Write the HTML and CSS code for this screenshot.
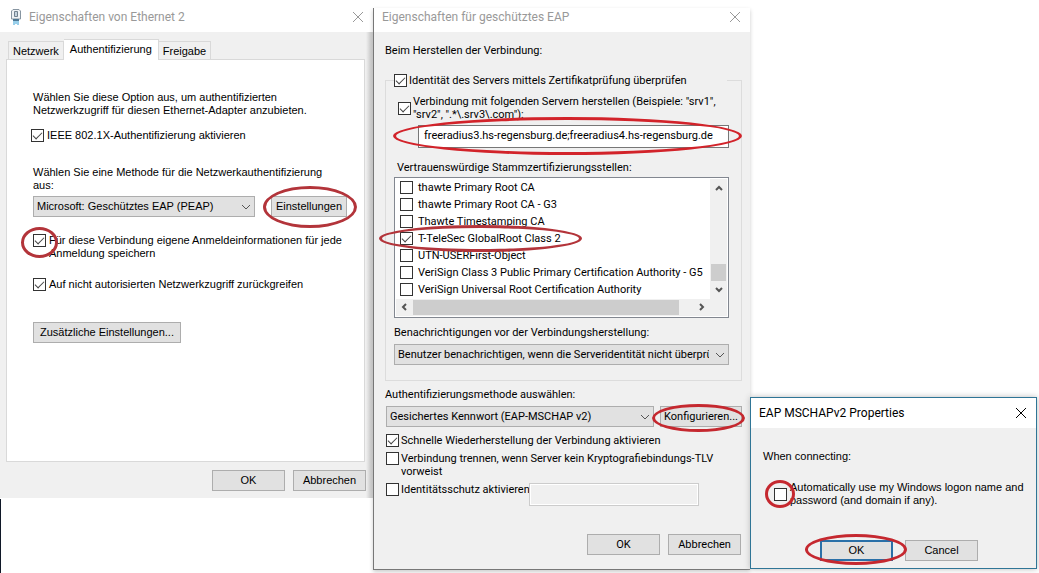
FILE: index.html
```html
<!DOCTYPE html>
<html lang="de">
<head>
  <meta charset="UTF-8">
  <title>Eigenschaften von Ethernet 2</title>
  <link rel="stylesheet" href="styles.css">
</head>
<body>
<main class="desktop">

  <section class="window ethernet">
    <header class="titlebar">
      <svg class="plug" width="12" height="18" viewBox="0 0 12 18">
        <path d="M3 1.500h6l1.500 1.500v8H1.500V3z" fill="#eef2f5" stroke="#8795a1"/>
        <path d="M4.500 3.500h3v5h-3z" fill="#c3d2dd" stroke="#71808e"/>
        <path d="M3 11h6v2H3z" fill="#4e7894"/>
        <path d="M4 13v4M6 13v3M8 13v4" stroke="#35a0d6"/>
      </svg>
      <h1>Eigenschaften von Ethernet 2</h1>
      <button class="close" aria-label="Schließen"><svg width="12" height="12" viewBox="0 0 12 12"><path d="M1 1l10 10M11 1L1 11"/></svg></button>
    </header>

    <div class="tabs">
      <button class="tab">Netzwerk</button>
      <button class="tab active">Authentifizierung</button>
      <button class="tab">Freigabe</button>
    </div>
    <div class="panel">
      <p>Wählen Sie diese Option aus, um authentifizierten<br>Netzwerkzugriff für diesen Ethernet-Adapter anzubieten.</p>
      <label class="check ieee"><input type="checkbox" checked>IEEE 802.1X-Authentifizierung aktivieren</label>

      <label class="method" for="methode">Wählen Sie eine Methode für die Netzwerkauthentifizierung<br>aus:</label>
      <div class="row">
        <span class="select">
          <select id="methode"><option>Microsoft: Geschütztes EAP (PEAP)</option></select>
          <svg width="10" height="6" viewBox="0 0 10 6"><path d="M1 1l4 4 4-4"/></svg>
        </span>
        <span class="marked mark-settings"><button class="btn">Einstellungen</button></span>
      </div>

      <label class="check eigene">
        <span class="marked mark-save"><input type="checkbox" checked></span>
        <span>Für diese Verbindung eigene Anmeldeinformationen für jede<br>Anmeldung speichern</span>
      </label>
      <label class="check fallback"><input type="checkbox" checked>Auf nicht autorisierten Netzwerkzugriff zurückgreifen</label>
      <button class="btn extra">Zusätzliche Einstellungen...</button>
    </div>

    <footer class="actions">
      <button class="btn">OK</button>
      <button class="btn">Abbrechen</button>
    </footer>
  </section>

  <section class="window eap">
    <header class="titlebar">
      <h1>Eigenschaften für geschütztes EAP</h1>
      <button class="close" aria-label="Schließen"><svg width="12" height="12" viewBox="0 0 12 12"><path d="M1 1l10 10M11 1L1 11"/></svg></button>
    </header>

    <div class="content">
      <p>Beim Herstellen der Verbindung:</p>

      <fieldset>
        <legend><label class="check"><input type="checkbox" checked>Identität des Servers mittels Zertifikatprüfung überprüfen</label></legend>
        <label class="check servers">
          <input type="checkbox" checked>
          <span>Verbindung mit folgenden Servern herstellen (Beispiele: "srv1",<br>"srv2", ".*\.srv3\.com"):</span>
        </label>
        <div class="marked mark-servers">
          <input class="text" type="text" aria-label="Server" value="freeradius3.hs-regensburg.de;freeradius4.hs-regensburg.de">
        </div>

        <p class="list-title">Vertrauenswürdige Stammzertifizierungsstellen:</p>
        <div class="list">
          <div class="items">
            <label class="check"><input type="checkbox">thawte Primary Root CA</label>
            <label class="check"><input type="checkbox">thawte Primary Root CA - G3</label>
            <label class="check"><input type="checkbox">Thawte Timestamping CA</label>
            <label class="check marked mark-telesec"><input type="checkbox" checked>T-TeleSec GlobalRoot Class 2</label>
            <label class="check"><input type="checkbox">UTN-USERFirst-Object</label>
            <label class="check"><input type="checkbox">VeriSign Class 3 Public Primary Certification Authority - G5</label>
            <label class="check"><input type="checkbox">VeriSign Universal Root Certification Authority</label>
          </div>
          <div class="vbar">
            <svg width="8" height="6" viewBox="0 0 8 6"><path d="M1 5l3-3 3 3"/></svg>
            <span class="thumb"></span>
            <svg width="8" height="6" viewBox="0 0 8 6"><path d="M1 1l3 3 3-3"/></svg>
          </div>
          <div class="hbar">
            <svg width="6" height="8" viewBox="0 0 6 8"><path d="M5 1L2 4l3 3"/></svg>
            <span class="thumb"></span>
            <svg width="6" height="8" viewBox="0 0 6 8"><path d="M1 1l3 3-3 3"/></svg>
          </div>
        </div>

        <label class="notify" for="benachrichtigung">Benachrichtigungen vor der Verbindungsherstellung:</label>
        <span class="select">
          <select id="benachrichtigung"><option>Benutzer benachrichtigen, wenn die Serveridentität nicht überprüft werden kann</option></select>
          <svg width="10" height="6" viewBox="0 0 10 6"><path d="M1 1l4 4 4-4"/></svg>
        </span>
      </fieldset>

      <label class="auth" for="auth">Authentifizierungsmethode auswählen:</label>
      <div class="row">
        <span class="select">
          <select id="auth"><option>Gesichertes Kennwort (EAP-MSCHAP v2)</option></select>
          <svg width="10" height="6" viewBox="0 0 10 6"><path d="M1 1l4 4 4-4"/></svg>
        </span>
        <span class="marked mark-config"><button class="btn">Konfigurieren...</button></span>
      </div>

      <div class="options">
        <label class="check"><input type="checkbox" checked>Schnelle Wiederherstellung der Verbindung aktivieren</label>
        <label class="check"><input type="checkbox"><span>Verbindung trennen, wenn Server kein Kryptografiebindungs-TLV<br>vorweist</span></label>
        <div class="identity">
          <label class="check"><input type="checkbox">Identitätsschutz aktivieren</label>
          <input class="text" type="text" aria-label="Anonyme Identität" disabled>
        </div>
      </div>
    </div>

    <footer class="actions">
      <button class="btn">OK</button>
      <button class="btn">Abbrechen</button>
    </footer>
  </section>

  <section class="window mschap" lang="en">
    <header class="titlebar">
      <h1>EAP MSCHAPv2 Properties</h1>
      <button class="close" aria-label="Close"><svg width="12" height="12" viewBox="0 0 12 12"><path d="M1 1l10 10M11 1L1 11"/></svg></button>
    </header>
    <div class="content">
      <p>When connecting:</p>
      <label class="check">
        <span class="marked mark-auto"><input type="checkbox"></span>
        <span>Automatically use my Windows logon name and<br>password (and domain if any).</span>
      </label>
    </div>
    <footer class="actions">
      <span class="marked mark-ok"><button class="btn default">OK</button></span>
      <button class="btn">Cancel</button>
    </footer>
  </section>

</main>
</body>
</html>
```
FILE: styles.css
```css
*, *::before, *::after {
  box-sizing: border-box;
}
body {
  margin: 0;
  background: #fff;
  color: #000;
  font: 11px/13px "Liberation Sans", Arial, sans-serif;
}
p, h1 {
  margin: 0;
}
button, input, select {
  margin: 0;
  font: inherit;
  color: inherit;
}
.desktop {
  display: grid;
  grid-template-columns: minmax(0, 373fr) minmax(0, 377fr) minmax(0, 289fr);
  align-items: start;
  min-height: 100vh;
  padding-top: 8px;
  background: linear-gradient(#101828, #101828) no-repeat 0 100% / 1px 74px;
}

/* windows */
.window {
  position: relative;
  display: flex;
  flex-direction: column;
  background: #f0f0f0;
  white-space: nowrap;
}
.ethernet {
  height: 490px;
  background: linear-gradient(to left, #bbb, #f0f0f0 7px);
}
.eap {
  height: 562px;
  border: 1px solid #777;
  border-top: 0;
  border-right: 0;
  box-shadow: 0 2px 4px #ccc;
  font-family: Roboto, Tahoma, sans-serif;
}
.mschap {
  align-self: end;
  height: 172px;
  margin: 0 2px 4px 0;
  border: 1px solid #2f7596;
  box-shadow: 0 0 6px #bbb;
}
.titlebar {
  display: flex;
  align-items: center;
  height: 24px;
  padding: 0 9px 6px 8px;
  background: #fff;
  color: #999;
}
.titlebar h1 {
  flex: 1;
  font: 12px/16px Roboto, "Segoe UI", sans-serif;
}
.plug {
  margin: 0 7px 0 2px;
}
.mschap .titlebar {
  height: 30px;
  padding-bottom: 0;
  color: #000;
}
.close {
  display: flex;
  padding: 0;
  border: 0;
  background: none;
}
.close path {
  fill: none;
  stroke: currentColor;
}

/* controls */
.btn {
  width: 73px;
  height: 21px;
  padding: 0;
  border: 1px solid #adadad;
  background: #e1e1e1;
}
.btn.default {
  border: 2px solid #2a70a8;
}
.actions {
  display: flex;
  justify-content: flex-end;
  gap: 8px;
  margin-top: auto;
}
.row {
  display: flex;
}
.check {
  display: flex;
  align-items: flex-start;
  gap: 3px;
}
input[type=checkbox] {
  appearance: none;
  display: block;
  flex: none;
  width: 13px;
  height: 13px;
  border: 1px solid #333;
  background: #fff;
}
input[type=checkbox]:checked::before {
  content: "";
  display: block;
  width: 9px;
  height: 5px;
  margin: 2px 1px;
  border: solid #444;
  border-width: 0 0 1px 1px;
  transform: rotate(-45deg);
}
.select {
  position: relative;
  display: flex;
  flex: 1;
}
.select select {
  appearance: none;
  width: 100%;
  height: 21px;
  padding: 0 19px 0 3px;
  border: 1px solid #adadad;
  border-radius: 0;
  background: #e1e1e1;
}
.select svg {
  position: absolute;
  right: 4px;
  top: 8px;
}
.select path {
  fill: none;
  stroke: #555;
}
.text {
  height: 23px;
  padding: 0 5px 2px;
  border: 1px solid #777;
  background: #fff;
}
.text:disabled {
  border-color: #ccc;
  background: #f0f0f0;
  box-shadow: inset 0 0 0 1px #fff;
}

/* red hand-drawn rings */
.marked {
  position: relative;
}
.marked::after {
  content: "";
  position: absolute;
  z-index: 2;
  border: 3px solid #b3343a;
  border-radius: 50%;
  pointer-events: none;
}
.mark-settings::after { inset: -10px -10px -11px -8px; }
.mark-save::after { inset: -7px -12px -11px; }
.mark-servers::after { inset: -8px -13px -7px -25px; border-color: #d2232a; }
.mark-telesec::after { inset: -5px auto -5px -17px; width: 203px; }
.mark-config::after { inset: -2px -3px -5px -8px; border-color: #c5282f; }
.mark-auto::after { inset: -8px -8px -7px -9px; border-color: #c5282f; }
.mark-ok::after { inset: -6px -14px -4px -15px; border-color: #c5282f; }

/* Ethernet */
.tabs {
  display: flex;
  align-items: flex-end;
  margin: 7px 0 -1px 8px;
}
.tab {
  height: 19px;
  padding: 0 4px;
  border: 1px solid #d9d9d9;
  border-bottom: 0;
  border-left: 0;
  background: #f0f0f0;
}
.tab:first-child {
  border-left: 1px solid #d9d9d9;
}
.tab.active {
  z-index: 1;
  height: 21px;
  padding: 0 6px 2px;
  background: #fff;
}
.panel {
  height: 403px;
  margin: 0 8px 0 6px;
  padding: 31px 17px 0 26px;
  border: 1px solid #d9d9d9;
  background: #fff;
}
.ieee {
  margin: 12px 0 24px -2px;
}
.method {
  display: block;
  margin-bottom: 4px;
}
.panel .row {
  gap: 16px;
  margin-bottom: 17px;
}
.panel .row .btn {
  width: 76px;
}
.eigene {
  margin-bottom: 18px;
}
.extra {
  width: 148px;
  margin-top: 31px;
}
.ethernet .actions {
  padding: 0 7px 7px 0;
}

/* EAP */
.eap .content {
  padding: 12px 8px 0 11px;
}
fieldset {
  min-width: 0;
  margin: 17px 0 7px;
  padding: 8px 12px 15px 8px;
  border: 1px solid #dcdcdc;
}
legend {
  width: 333px;
  padding: 0;
}
.servers {
  align-items: center;
  margin: 0 0 4px 4px;
}
.mark-servers {
  margin-left: 24px;
}
.mark-servers .text {
  display: block;
  width: 100%;
}
.list-title {
  margin: 13px 0 3px 3px;
}
.list {
  display: grid;
  grid-template-columns: 1fr 17px;
  height: 141px;
  padding: 1px;
  border: 1px solid #828790;
  background: #fff;
}
.items .check {
  height: 17px;
  padding: 2px 0 0 4px;
}
.list svg {
  flex: none;
}
.list path {
  fill: none;
  stroke: #555;
  stroke-width: 2;
}
.vbar, .hbar {
  display: flex;
  align-items: center;
  background: #f0f0f0;
}
.vbar {
  flex-direction: column;
  padding: 6px 0;
}
.vbar .thumb {
  width: 15px;
  height: 17px;
  margin: auto 0 6px;
  background: #cdcdcd;
}
.hbar {
  grid-column: 1 / 3;
  height: 17px;
  padding: 0 22px 0 5px;
}
.hbar .thumb {
  flex: 1;
  height: 15px;
  margin: 0 20px 0 6px;
  background: #cdcdcd;
}
.notify, .auth {
  display: block;
}
.notify {
  margin: 8px 0 5px;
}
.auth {
  margin-bottom: 5px;
}
.eap .row {
  gap: 6px;
  margin-left: 1px;
}
.eap .row .btn {
  width: 82px;
}
.options {
  display: grid;
  gap: 5px;
  margin: 7px 0 0 1px;
}
.eap .check {
  gap: 2px;
}
.eap .items .check {
  gap: 5px;
}
.identity {
  display: flex;
}
.identity .check {
  width: 143px;
}
.identity .text {
  width: 170px;
}
.eap .actions {
  padding: 0 9px 14px 0;
}

/* MSCHAP */
.mschap .content {
  padding: 22px 12px;
}
.mschap .content .check {
  align-items: center;
  margin: 18px 0 0 11px;
}
.mschap .actions {
  gap: 12px;
  padding: 0 58px 7px 0;
}
```
